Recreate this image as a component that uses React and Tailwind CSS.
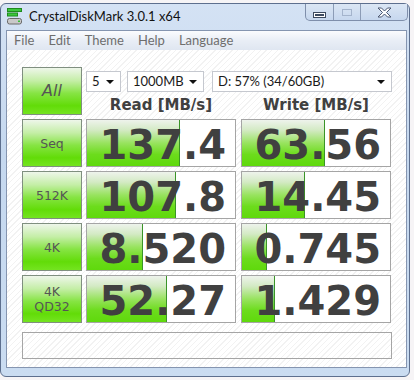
import React from "react";

const rows = [
  { label: ["Seq"], read: "137.4", readFill: 93, write: "63.56", writeFill: 83 },
  { label: ["512K"], read: "107.8", readFill: 89, write: "14.45", writeFill: 63 },
  { label: ["4K"], read: "8.520", readFill: 56, write: "0.745", writeFill: 25 },
  { label: ["4K", "QD32"], read: "52.27", readFill: 80, write: "1.429", writeFill: 33 },
];

const greenBtn =
  "bg-[linear-gradient(to_bottom,#eef6ea_0%,#c4eea6_28%,#86e443_55%,#62dc08_82%,#74e420_100%)]";
const greenBar =
  "bg-[linear-gradient(to_bottom,#eef3ec_0%,#d3eac4_22%,#98e35f_50%,#6cdc1c_75%,#5fd90c_100%)]";
const hatch =
  "bg-[repeating-linear-gradient(135deg,#ffffff_0px,#ffffff_3px,#f2f2f2_3px,#f2f2f2_4px)]";

function AppIcon() {
  return (
    <svg width="16" height="17" viewBox="0 0 16 17">
      <rect x="0.5" y="0.5" width="14" height="3" fill="#3cc83c" stroke="#1f8a1f" />
      <rect x="0.5" y="5" width="10" height="3" fill="#3cc83c" stroke="#1f8a1f" />
      <rect x="0.5" y="10.5" width="14" height="5.5" rx="2" fill="#c9c9c9" stroke="#6a6a6a" />
      <rect x="11" y="12.5" width="2" height="1.5" fill="#38c038" />
    </svg>
  );
}

function CaptionButtons() {
  return (
    <div className="ml-auto mr-[1px] flex h-[17px] shrink-0 rounded-b-[5px] border border-t-0 border-[#7f8fab] bg-[linear-gradient(to_bottom,#dbe6f4,#c6d7ee)]">
      <div className="flex w-[28px] items-center justify-center border-r border-[#8c9cb6]">
        <div className="mt-[5px] h-[4px] w-[11px] border border-white bg-[#3c4a60] outline outline-1 outline-[#3c4a60]" />
      </div>
      <div className="flex w-[27px] items-center justify-center border-r border-[#8c9cb6]">
        <div className="h-[7px] w-[10px] border border-[#a4b4cc]" />
      </div>
      <div className="flex w-[46px] items-center justify-center">
        <svg width="15" height="11" viewBox="0 0 15 11">
          <path
            d="M1 1 L4.5 1 L7.5 4 L10.5 1 L14 1 L9.5 5.5 L14 10 L10.5 10 L7.5 7 L4.5 10 L1 10 L5.5 5.5 Z"
            fill="#ffffff"
            stroke="#4a5670"
            strokeWidth="1"
          />
        </svg>
      </div>
    </div>
  );
}

function Select({ width, text }) {
  return (
    <div
      className={`flex h-[21px] shrink-0 items-center justify-between border border-[#c5c8cf] bg-white pl-[5px] pr-[6px] text-[13px] text-[#1a1a1a] ${width}`}
    >
      <span>{text}</span>
      <svg width="8" height="4" viewBox="0 0 8 4">
        <path d="M0 0 H8 L4 4 Z" fill="#111111" />
      </svg>
    </div>
  );
}

function LabelButton({ lines, big }) {
  return (
    <div
      className={`flex h-[48px] w-[60px] flex-col items-center justify-center border border-[#7f8f7f] ${greenBtn} font-['DejaVu_Sans',sans-serif] text-[#555555] ${
        big ? "text-[16px] italic leading-[18px]" : "text-[12.5px] leading-[15px]"
      }`}
    >
      {lines.map((l) => (
        <span key={l}>{l}</span>
      ))}
    </div>
  );
}

function Cell({ value, fill }) {
  return (
    <div className="relative h-[48px] w-[150px] border border-[#a5a5a5] bg-white">
      <div
        className={`absolute bottom-0 left-0 top-0 border-r border-[#3a9428] ${greenBar}`}
        style={{ width: fill }}
      />
      <div className="relative flex h-full items-center justify-end pr-[9px] pt-[3px] font-['DejaVu_Sans',sans-serif] text-[40px] font-bold leading-none text-[#404040]">
        {value}
      </div>
    </div>
  );
}

export default function App() {
  return (
    <div className="h-[380px] w-[414px] overflow-hidden bg-[#f6f4f6] pt-[3px] font-['Lato','Noto_Sans',sans-serif]">
      <div className="flex h-[374px] w-[410px] flex-col rounded-[6px] border border-[#5d6f8e] bg-[linear-gradient(to_bottom,#d4e2f4,#c5d8ef_40%,#cadcf1)]">
        {/* title bar */}
        <div className="flex h-[26px] items-start">
          <div className="ml-[6px] mt-[4px]">
            <AppIcon />
          </div>
          <span className="ml-[6px] mt-[3px] text-[13px] text-[#111111]">CrystalDiskMark 3.0.1 x64</span>
          <CaptionButtons />
        </div>

        {/* client */}
        <div className="ml-[5px] mr-[2px] flex flex-col border border-[#8595b0] bg-white">
          <div className="flex h-[19px] items-center gap-[14px] bg-[linear-gradient(to_bottom,#fbfcfe,#e9eef6_50%,#dfe6f1)] pl-[7px] text-[13px] text-[#6e6e6e]">
            <span>File</span>
            <span>Edit</span>
            <span>Theme</span>
            <span>Help</span>
            <span>Language</span>
          </div>

          <div className={`flex flex-col pb-[8px] pl-[15px] pt-[17px] ${hatch}`}>
            <div className="grid grid-cols-[60px_150px_151px] gap-x-[4px] gap-y-[4px]">
              <LabelButton lines={["All"]} big />
              <div className="col-span-2 flex flex-col">
                <div className="mt-[4px] flex">
                  <Select width="w-[35px]" text="5" />
                  <div className="ml-[6px]">
                    <Select width="w-[77px]" text="1000MB" />
                  </div>
                  <div className="ml-[8px]">
                    <Select width="w-[180px]" text="D: 57% (34/60GB)" />
                  </div>
                </div>
                <div className="flex h-[23px] items-center pt-[4px] font-['DejaVu_Sans',sans-serif] text-[15px] font-bold text-[#404040]">
                  <span className="w-[150px] text-center">Read [MB/s]</span>
                  <span className="ml-[5px] w-[150px] text-center">Write [MB/s]</span>
                </div>
              </div>

              {rows.map((r) => (
                <React.Fragment key={r.read}>
                  <LabelButton lines={r.label} />
                  <Cell value={r.read} fill={r.readFill} />
                  <div className="ml-[1px]">
                    <Cell value={r.write} fill={r.writeFill} />
                  </div>
                </React.Fragment>
              ))}
            </div>

            <div className="mt-[9px] h-[27px] w-[370px] border border-[#a5a5a5]" />
          </div>
        </div>
      </div>
    </div>
  );
}
